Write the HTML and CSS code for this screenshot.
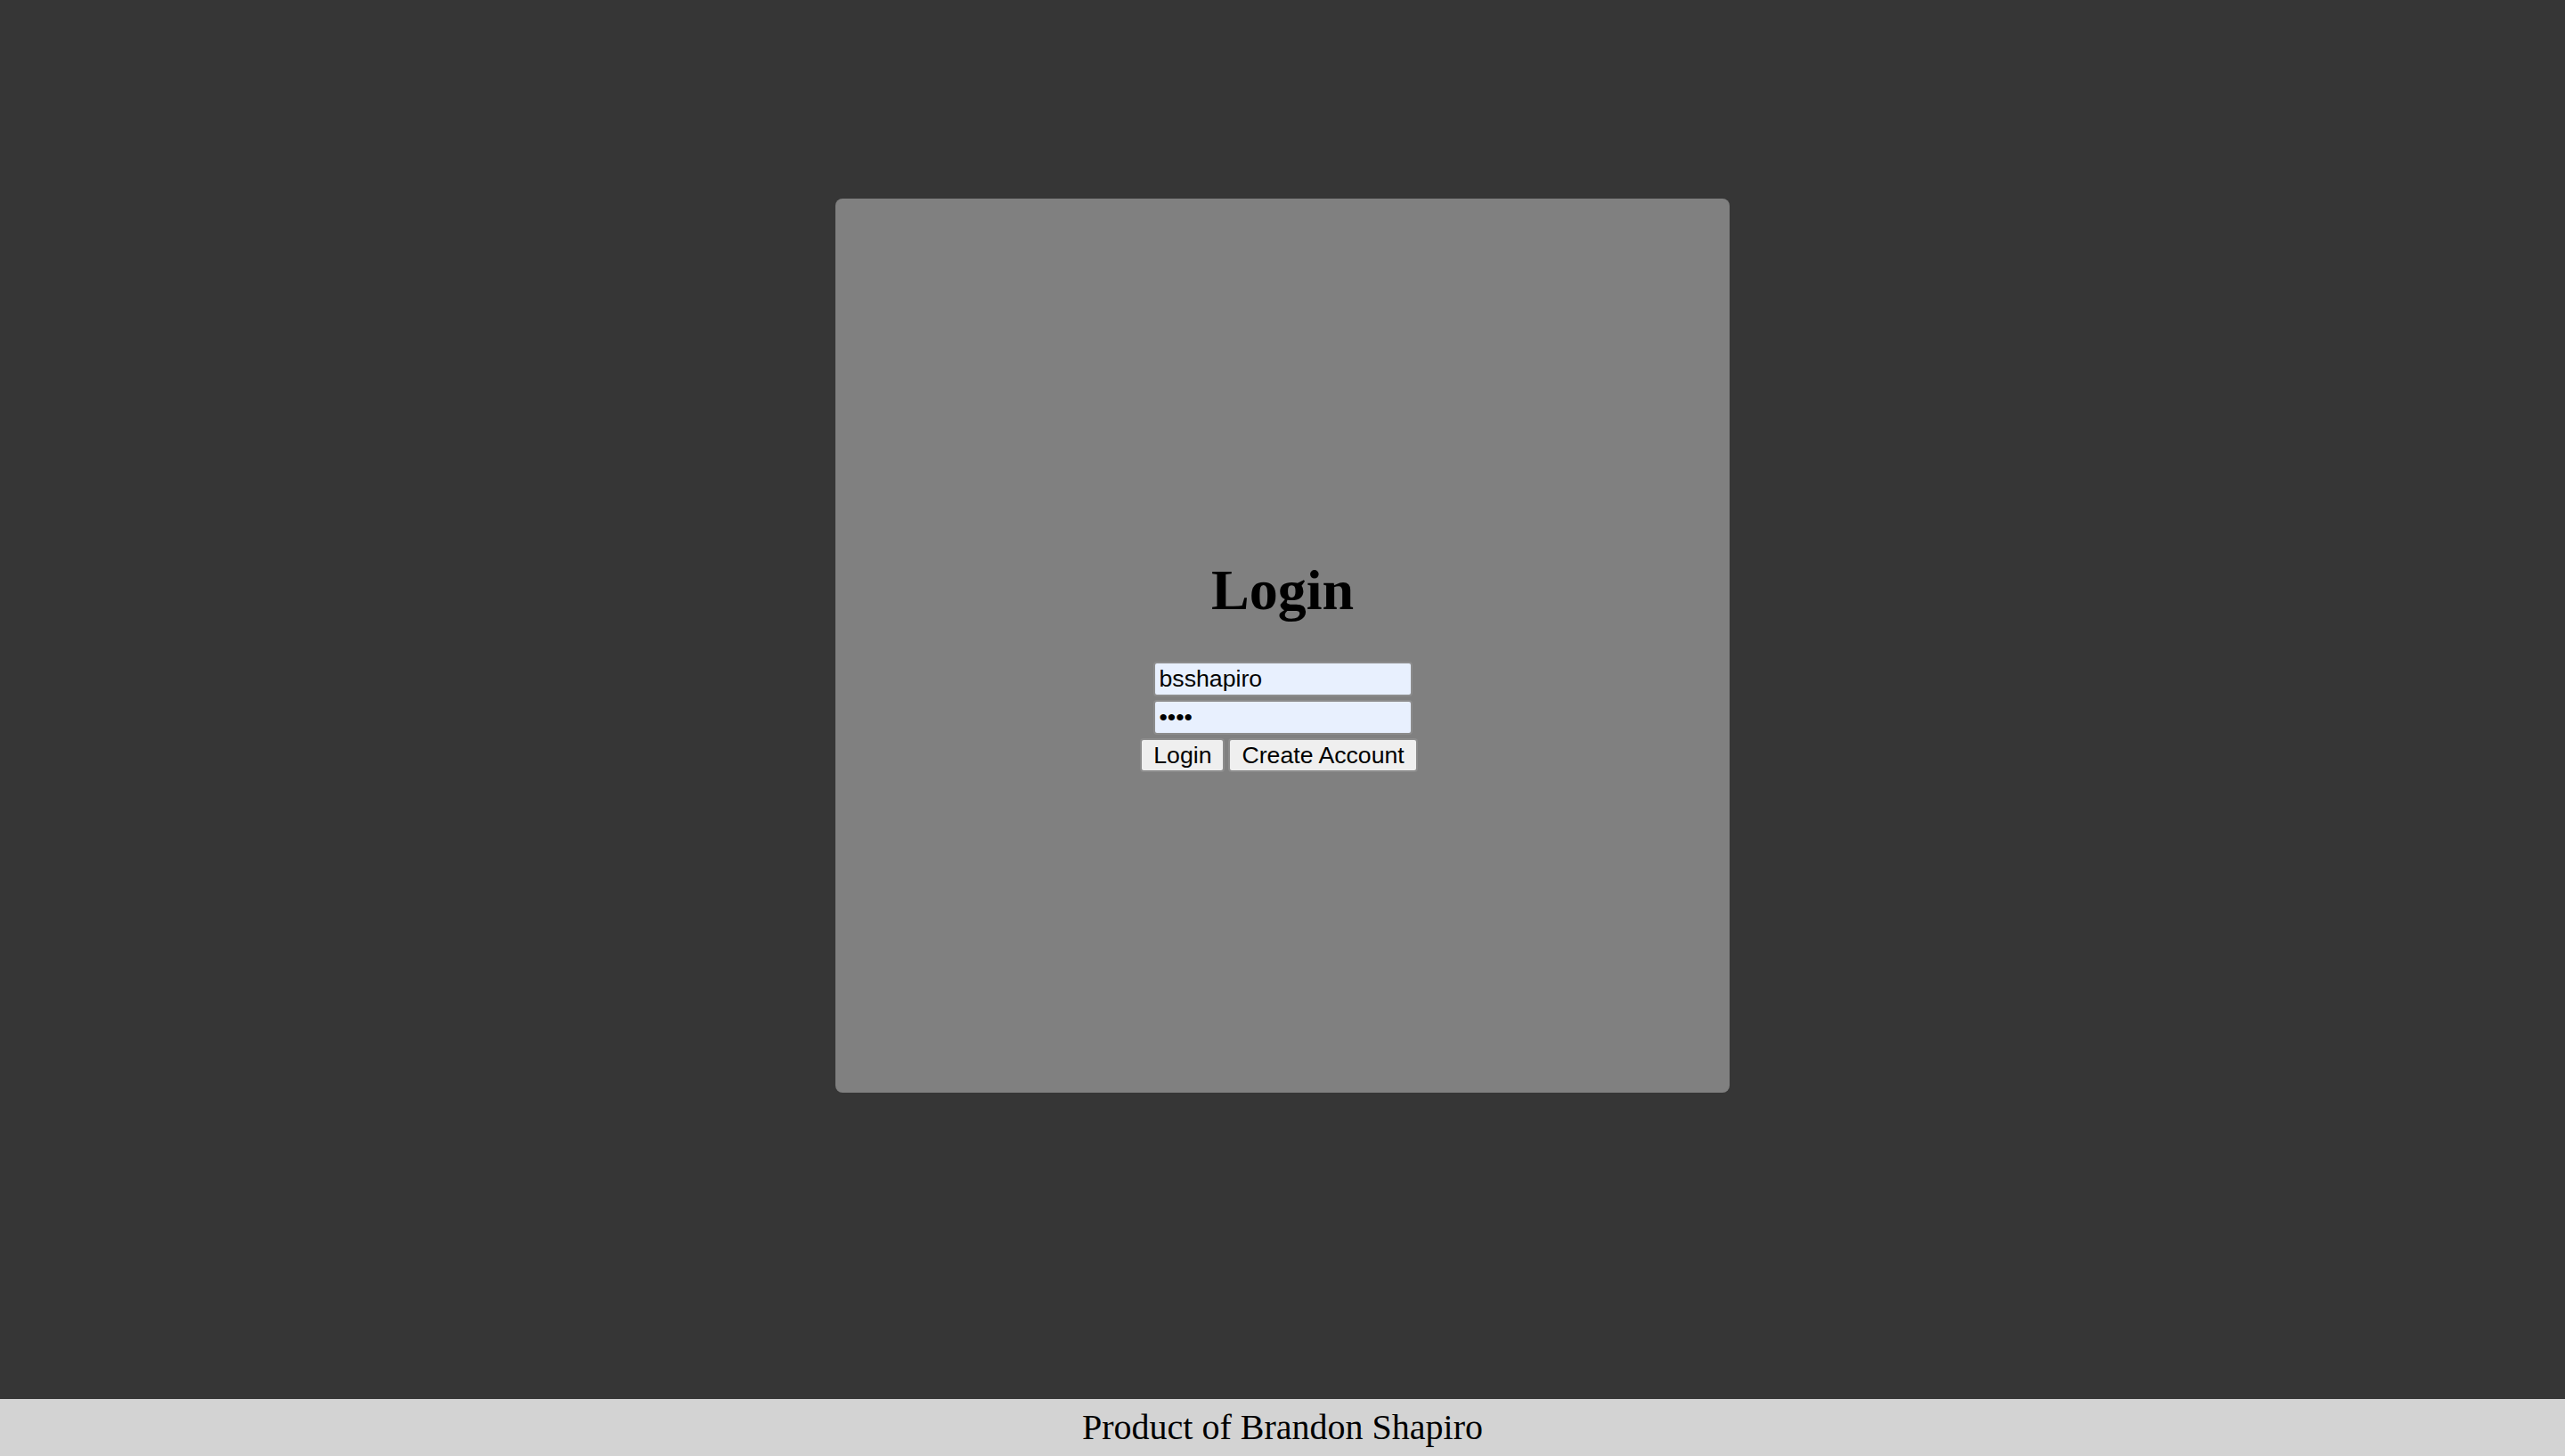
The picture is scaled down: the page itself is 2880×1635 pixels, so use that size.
FILE: index.html
```html
<!DOCTYPE html>
<html lang="en">
<head>
<meta charset="utf-8">
<title>Login</title>
<link rel="stylesheet" href="styles.css">
</head>
<body>
<main class="page">
  <section class="card">
    <h1 class="title">Login</h1>
    <form class="form">
      <input class="field" type="text" value="bsshapiro">
      <input class="field" type="password" value="abcd">
      <div class="actions">
        <button class="btn" type="button">Login</button>
        <button class="btn" type="button">Create Account</button>
      </div>
    </form>
  </section>
</main>
<footer class="footer">Product of Brandon Shapiro</footer>
</body>
</html>
```

FILE: styles.css
```css
html, body {
  margin: 0;
  padding: 0;
}
body {
  background: #363636;
  font-family: "Liberation Serif", "Times New Roman", serif;
  height: 1635px;
  display: flex;
  flex-direction: column;
  overflow: hidden;
}
.page {
  flex: 1;
  padding-top: 223px;
  display: flex;
  justify-content: center;
  align-items: flex-start;
}
.card {
  width: 1004px;
  height: 1004px;
  box-sizing: border-box;
  background: #808080;
  border-radius: 8px;
  display: flex;
  flex-direction: column;
  align-items: center;
  justify-content: center;
}
.title {
  font-size: 64px;
  font-weight: bold;
  margin: 43px 0;
  line-height: normal;
  color: #000;
}
.form {
  display: flex;
  flex-direction: column;
  align-items: center;
  gap: 4px;
  margin: 0;
}
.field {
  box-sizing: border-box;
  width: 291px;
  height: 39px;
  margin: 0;
  padding: 2px 5px;
  border: 2px solid #8c8c8c;
  border-radius: 4px;
  background: #e8f0fe;
  font-family: "Liberation Sans", Arial, sans-serif;
  font-size: 26.67px;
  color: #000;
  outline: none;
}
.actions {
  display: flex;
  gap: 4px;
  padding-right: 8px;
}
.btn {
  box-sizing: border-box;
  height: 38px;
  margin: 0;
  padding: 2px 13px;
  border: 2px solid #8c8c8c;
  border-radius: 4px;
  background: #efefef;
  font-family: "Liberation Sans", Arial, sans-serif;
  font-size: 26.67px;
  color: #000;
  line-height: normal;
}
.footer {
  height: 64px;
  box-sizing: border-box;
  padding-top: 8px;
  background: #d3d3d3;
  text-align: center;
  font-size: 40px;
  color: #000;
}
```
